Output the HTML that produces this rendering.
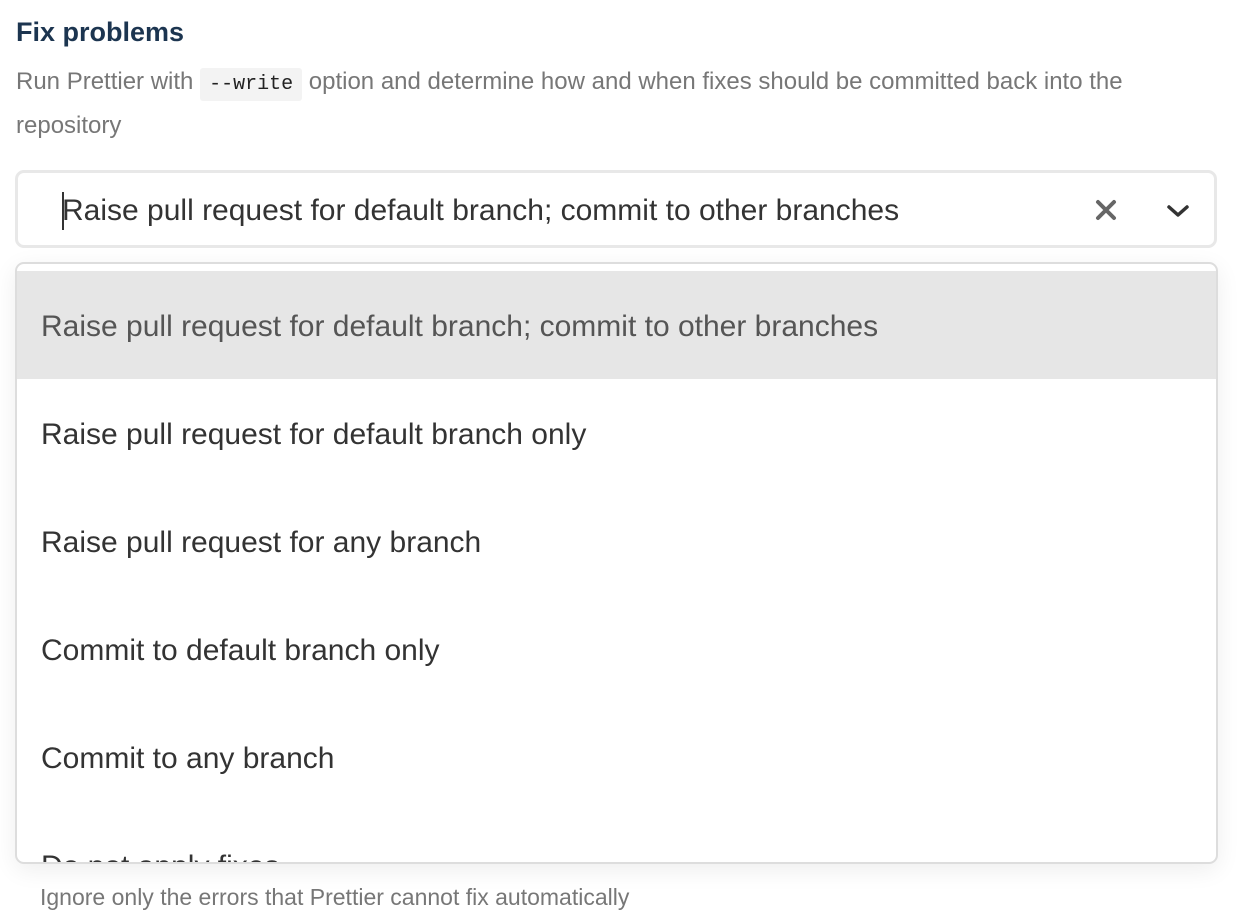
<!DOCTYPE html>
<html><head><meta charset="utf-8"><style>
body{margin:0;width:1240px;height:886px;overflow:hidden;background:#fff;font-family:"Liberation Sans",sans-serif;position:relative}
h1{position:absolute;left:16px;top:14px;margin:0;font-size:27px;font-weight:bold;color:#1c3550;line-height:36px}
.desc{position:absolute;left:16px;top:61px;width:1150px;font-size:24px;line-height:41px;color:#777;margin:0}
code{font-family:"Liberation Mono",monospace;font-size:20px;background:#f3f3f3;color:#222;padding:5px 9px;border-radius:3px}
.sel{position:absolute;left:15px;top:170px;width:1196px;height:72px;border:3px solid #e8e8e8;border-radius:9px;background:#fff}
.sel .v{position:absolute;left:44px;top:20px;font-size:30px;color:#333;line-height:36px}
.caret{position:absolute;left:44px;top:19px;width:2px;height:38px;background:#333}
.menu{position:absolute;left:15px;top:262px;width:1199px;height:598px;border:2px solid #ddd;border-radius:9px;background:#fff;overflow:hidden;box-shadow:0 6px 24px rgba(0,0,0,.07)}
.opt{position:absolute;left:0;width:100%;height:108px;font-size:30px;color:#333;}
.opt span{position:absolute;left:24px;top:38px;line-height:36px}
.hl{background:#e6e6e6;color:#555}
.below{position:absolute;left:40px;top:884px;font-size:23px;color:#777}
</style></head><body>
<h1>Fix problems</h1>
<p class="desc">Run Prettier with <code>--write</code> option and determine how and when fixes should be committed back into the repository</p>
<div class="below">Ignore only the errors that Prettier cannot fix automatically</div>
<div class="sel"><div class="caret"></div><div class="v">Raise pull request for default branch; commit to other branches</div>
<svg style="position:absolute;left:1077px;top:26px" width="22" height="22" viewBox="0 0 22 22"><path d="M3 3L19 19M19 3L3 19" stroke="#666" stroke-width="4" stroke-linecap="round"/></svg>
<svg style="position:absolute;left:1148px;top:30px" width="24" height="16" viewBox="0 0 24 16"><path d="M3 4L12 12L21 4" stroke="#333" stroke-width="3.5" fill="none" stroke-linecap="round" stroke-linejoin="round"/></svg>
</div>
<div class="menu">
<div class="opt hl" style="top:7px"><span>Raise pull request for default branch; commit to other branches</span></div>
<div class="opt" style="top:115px"><span>Raise pull request for default branch only</span></div>
<div class="opt" style="top:223px"><span>Raise pull request for any branch</span></div>
<div class="opt" style="top:331px"><span>Commit to default branch only</span></div>
<div class="opt" style="top:439px"><span>Commit to any branch</span></div>
<div class="opt" style="top:547px"><span>Do not apply fixes</span></div>
</div>
</body></html>
